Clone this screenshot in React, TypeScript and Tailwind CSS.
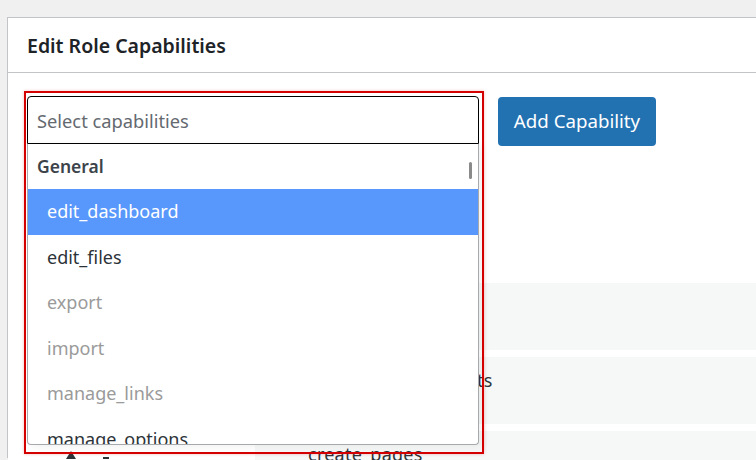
import React from "react";

const font = { fontFamily: '"Noto Sans", "Open Sans", Arial, sans-serif' };

type Opt = { label: string; kind: "hl" | "normal" | "disabled" };

const options: Opt[] = [
  { label: "edit_dashboard", kind: "hl" },
  { label: "edit_files", kind: "normal" },
  { label: "export", kind: "disabled" },
  { label: "import", kind: "disabled" },
  { label: "manage_links", kind: "disabled" },
  { label: "manage_options", kind: "normal" },
];

const rows = ["delete_pages", "moderate_comments", "create_pages"];

export default function App() {
  return (
    <div
      className="relative w-[756px] h-[460px] overflow-hidden bg-[#f0f0f1] pt-[17px] pl-[7px]"
      style={font}
    >
      <div className="h-[441px] bg-white border border-r-0 border-[#c3c4c7] flex flex-col">
        <div className="h-[55px] shrink-0 border-b border-[#c3c4c7] flex items-center pl-[19px] pt-[1px]">
          <h2 className="text-[19.5px] font-semibold text-[#1d2327] leading-none">
            Edit Role Capabilities
          </h2>
        </div>
        <div className="relative flex-1 pt-[23px]">
          <div className="flex items-start pl-[19px]">
            <div className="w-[452px] h-[48px] border border-black rounded-t-[4px] bg-white flex items-center pl-[9px] pt-[2px]">
              <span className="text-[18.3px] text-[#646970]">Select capabilities</span>
            </div>
            <button className="ml-[19px] mt-[1px] w-[158px] h-[49px] rounded-[4px] bg-[#2271b1] text-white text-[18.7px] flex items-center justify-center">
              Add Capability
            </button>
          </div>

          <div className="mt-[137px] flex flex-col gap-[7px]">
            {rows.map((r, i) => (
              <div key={i} className="flex h-[67px]">
                <div className="w-[247px] bg-white relative">
                  {i === 2 && (
                    <>
                      <svg
                        className="absolute left-[58px] top-[20px]"
                        width="10"
                        height="10"
                        viewBox="0 0 10 10"
                      >
                        <path d="M5 0 L10 8 L0 8 Z" fill="#2c3338" />
                      </svg>
                      <div className="absolute left-[95px] top-[26px] w-[6px] h-[2px] bg-[#2c3338]" />
                    </>
                  )}
                </div>
                <div className="flex-1 bg-[#f6f7f7] pl-[53px] pt-[11px]">
                  <span className="text-[18px] leading-[24px] text-[#2c3338] tracking-[0.25px]">
                    {r}
                  </span>
                </div>
              </div>
            ))}
          </div>

          {/* dropdown */}
          <div className="absolute left-[19px] top-[71px] w-[452px] h-[301px] bg-white border border-t-0 border-[#a7aaad] rounded-b-[4px] overflow-hidden shadow-[4px_2px_8px_rgba(0,0,0,0.06)]">
            <div className="h-[45px] flex items-center pl-[9px]">
              <span className="text-[17.5px] font-semibold text-[#3c434a]">General</span>
            </div>
            {options.map((o) => (
              <div
                key={o.label}
                className={
                  "h-[45.5px] flex items-center pl-[19px] " +
                  (o.kind === "hl" ? "bg-[#5897fb]" : "")
                }
              >
                <span
                  className={
                    "text-[18px] " +
                    (o.kind === "hl"
                      ? "text-white"
                      : o.kind === "disabled"
                      ? "text-[#9a9a9a]"
                      : "text-[#2c3338]")
                  }
                >
                  {o.label}
                </span>
              </div>
            ))}
            <div className="absolute right-[6px] top-[18px] w-[3px] h-[17px] rounded-full bg-[#8a8a8a]" />
          </div>
        </div>
      </div>

      {/* red annotation box */}
      <div className="absolute left-[24px] top-[91px] w-[460px] h-[363px] border-2 border-[#d40000] shadow-[0_0_3px_rgba(212,0,0,0.25)] pointer-events-none" />
    </div>
  );
}
